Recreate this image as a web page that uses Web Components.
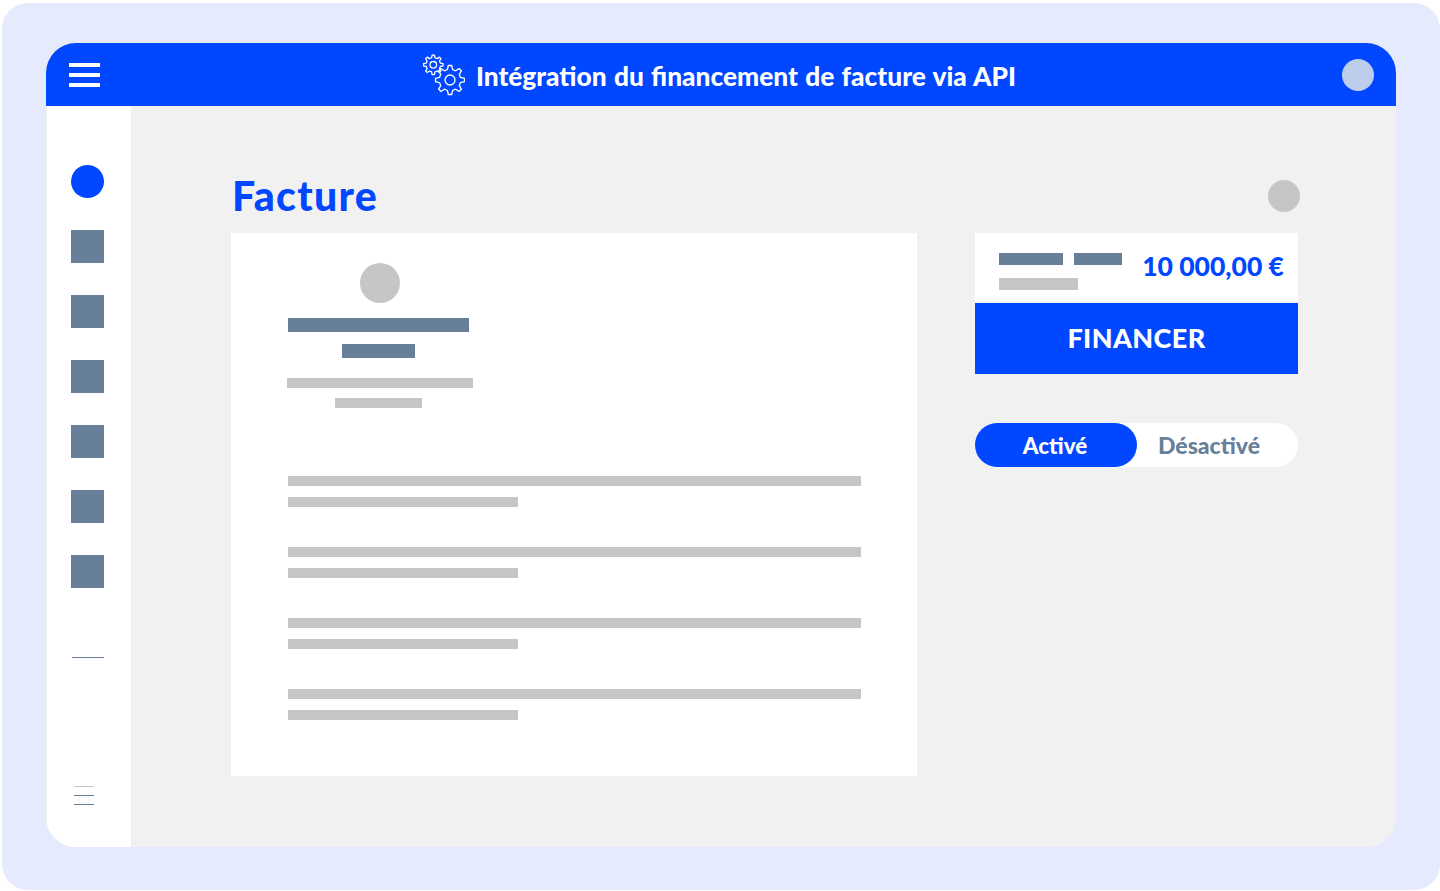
<!DOCTYPE html>
<html lang="fr">
<head>
<meta charset="utf-8">
<title>Facture</title>
<style>
  html, body { margin: 0; padding: 0; background: #fff; }
  body { font-family: "Lato", "Liberation Sans", sans-serif; }
</style>
</head>
<body>
<app-frame>
  <top-bar slot="top" label="Intégration du financement de facture via API"></top-bar>
  <side-nav slot="side"></side-nav>
  <invoice-page>
    <invoice-doc slot="doc"></invoice-doc>
    <pay-panel slot="panel"></pay-panel>
  </invoice-page>
</app-frame>

<script>
// 8 tooth gear outline, used twice in the header
function gearPath(cx, cy, R, teeth) {
  const r = R * 0.74;
  const step = Math.PI * 2 / teeth;
  const pts = [];
  for (let n = 0; n < teeth; n++) {
    const a = n * step;
    pts.push([r, a - step * 0.30], [R, a - step * 0.15], [R, a + step * 0.15], [r, a + step * 0.30]);
  }
  return 'M' + pts.map(([d, a]) => (cx + d * Math.cos(a)).toFixed(2) + ' ' + (cy + d * Math.sin(a)).toFixed(2)).join('L') + 'Z';
}

class AppFrame extends HTMLElement {
  constructor() {
    super();
    this.attachShadow({ mode: 'open' });
    this.shadowRoot.innerHTML = `
      <style>
        :host { display: block; width: 1440px; height: 891px; box-sizing: border-box; padding: 3px 0 1px 2px; }
        .outer { height: 100%; box-sizing: border-box; background: #E5EAFD; border-radius: 26px; padding: 40px 44px 43px 44px; }
        .window { height: 100%; display: flex; flex-direction: column; border-radius: 30px; overflow: hidden; background: #F1F1F1; }
        .body { flex: 1; display: flex; min-height: 0; }
      </style>
      <div class="outer">
        <div class="window">
          <slot name="top"></slot>
          <div class="body">
            <slot name="side"></slot>
            <slot></slot>
          </div>
        </div>
      </div>
    `;
  }
}

class TopBar extends HTMLElement {
  constructor() {
    super();
    this.attachShadow({ mode: 'open' });
    this.shadowRoot.innerHTML = `
      <style>
        :host { display: flex; align-items: center; height: 63px; flex: none; background: #0047FF; color: #fff; padding: 0 22px 0 23px; box-sizing: border-box; }
        .burger { width: 31px; display: flex; flex-direction: column; gap: 6px; }
        .burger i { display: block; height: 4px; background: #fff; }
        .title { flex: 1; display: flex; align-items: center; justify-content: center; gap: 11px; padding-right: 3px; font-size: 26.3px; word-spacing: 1px; font-weight: 900; white-space: nowrap; }
        .title svg { flex: none; }
        .title span { position: relative; top: 1px; }
        .avatar { width: 32px; height: 32px; border-radius: 50%; background: #BDCDEB; }
      </style>
      <div class="burger"><i></i><i></i><i></i></div>
      <div class="title">
        <svg width="42" height="42" viewBox="0 0 42 42" fill="none" stroke="#fff" stroke-width="1.3" stroke-linejoin="round">
          <path d="${gearPath(10.3, 10.8, 9.8, 8)}"/>
          <circle cx="10.3" cy="10.800" r="3.300"/>
          <path d="${gearPath(27, 26, 14.6, 8)}"/>
          <circle cx="27" cy="26" r="5"/>
        </svg>
        <span id="label"></span>
      </div>
      <div class="avatar"></div>
    `;
  }
  connectedCallback() {
    this.shadowRoot.getElementById('label').textContent = this.getAttribute('label');
  }
}

class SideNav extends HTMLElement {
  constructor() {
    super();
    this.attachShadow({ mode: 'open' });
    this.shadowRoot.innerHTML = `
      <style>
        :host { display: flex; flex-direction: column; align-items: flex-start; flex: none; width: 85px; box-sizing: border-box; background: #fff; padding: 59px 0 0 24px; border-left: 1px solid #F1F1F1; }
        .dot { width: 33px; height: 33px; border-radius: 50%; background: #0047FF; }
        .sq { width: 33px; height: 33px; margin-top: 32px; background: #677F98; }
        .rule { width: 32px; height: 1px; margin: 69px 0 0 1px; background: #677F98; }
        .mini { width: 20px; margin: 128px 0 0 3px; display: flex; flex-direction: column; gap: 8px; }
        .mini i { display: block; height: 1px; background: #677F98; }
        .mini i:first-child { background: #BCC5D2; }
      </style>
      <div class="dot"></div>
      <div class="sq"></div><div class="sq"></div><div class="sq"></div>
      <div class="sq"></div><div class="sq"></div><div class="sq"></div>
      <div class="rule"></div>
      <div class="mini"><i></i><i></i><i></i></div>
    `;
  }
}

class InvoicePage extends HTMLElement {
  constructor() {
    super();
    this.attachShadow({ mode: 'open' });
    this.shadowRoot.innerHTML = `
      <style>
        :host { display: block; flex: 1; min-width: 0; box-sizing: border-box; padding: 73px 96px 0 100px; background: #F1F1F1; }
        .head { display: flex; justify-content: space-between; align-items: center; height: 34px; margin-bottom: 20px; }
        h1 { margin: 0; padding-left: 1px; font-size: 41px; letter-spacing: 1.3px; line-height: 34px; font-weight: 900; color: #0047FF; }
        .circle { width: 32px; height: 32px; border-radius: 50%; background: #C6C6C6; }
        .cols { display: flex; gap: 58px; align-items: flex-start; }
      </style>
      <div class="head"><h1>Facture</h1><div class="circle"></div></div>
      <div class="cols">
        <slot name="doc"></slot>
        <slot name="panel"></slot>
      </div>
    `;
  }
}

class InvoiceDoc extends HTMLElement {
  constructor() {
    super();
    this.attachShadow({ mode: 'open' });
    const blocks = [0, 1, 2, 3].map(() => '<div class="block"><i class="long"></i><i class="short"></i></div>').join('');
    this.shadowRoot.innerHTML = `
      <style>
        :host { display: block; flex: none; width: 686px; height: 543px; box-sizing: border-box; background: #fff; padding: 30px 56px 0 57px; }
        .head { width: 186px; margin-left: -1px; display: flex; flex-direction: column; align-items: center; }
        .logo { width: 40px; height: 40px; border-radius: 50%; background: #C6C6C6; }
        .b1 { width: 181px; height: 14px; background: #677F98; margin: 15px 4px 0 0; }
        .b2 { width: 73px; height: 14px; background: #677F98; margin: 12px 4px 0 0; }
        .g1 { width: 186px; height: 10px; background: #C6C6C6; margin-top: 20px; }
        .g2 { width: 87px; height: 10px; background: #C6C6C6; margin: 10px 4px 0 0; }
        .lines { margin-top: 68px; display: flex; flex-direction: column; gap: 40px; }
        .block { display: flex; flex-direction: column; gap: 11px; }
        .block i { display: block; height: 10px; background: #C6C6C6; }
        .long { width: 573px; }
        .short { width: 230px; }
      </style>
      <div class="head">
        <div class="logo"></div>
        <div class="b1"></div>
        <div class="b2"></div>
        <div class="g1"></div>
        <div class="g2"></div>
      </div>
      <div class="lines">${blocks}</div>
    `;
  }
}

class PayPanel extends HTMLElement {
  constructor() {
    super();
    this.attachShadow({ mode: 'open' });
    this.shadowRoot.innerHTML = `
      <style>
        :host { display: block; flex: none; width: 323px; }
        .sum { height: 69px; box-sizing: border-box; background: #fff; display: flex; justify-content: space-between; padding: 20px 14px 0 24px; }
        .bars { display: flex; flex-direction: column; gap: 13px; }
        .row { display: flex; gap: 11px; }
        .row i { display: block; height: 12px; background: #677F98; }
        .row i:first-child { width: 64px; }
        .row i:last-child { width: 48px; }
        .gray { width: 79px; height: 12px; border-radius: 1px; background: #C6C6C6; }
        .amount { font-size: 26.5px; line-height: 27px; font-weight: 900; color: #0047FF; white-space: nowrap; }
        button { display: block; width: 100%; height: 71px; margin-top: 1px; border: 0; padding: 0 0 2px; background: #0047FF; color: #fff; font: 900 27px "Lato", sans-serif; letter-spacing: .4px; }
        .toggle { margin-top: 49px; height: 44px; display: flex; background: #fff; border-radius: 22px; font-weight: 900; }
        .on { width: 162px; border-radius: 22px; background: #0047FF; color: #fff; font-size: 22.4px; display: flex; align-items: center; justify-content: center; padding-right: 2px; box-sizing: border-box; }
        .off { flex: 1; color: #677F98; font-size: 23px; display: flex; align-items: center; justify-content: center; padding-right: 17px; }
      </style>
      <div class="sum">
        <div class="bars">
          <div class="row"><i></i><i></i></div>
          <div class="gray"></div>
        </div>
        <div class="amount">10 000,00 €</div>
      </div>
      <button type="button">FINANCER</button>
      <div class="toggle"><div class="on">Activé</div><div class="off">Désactivé</div></div>
    `;
  }
}

customElements.define('app-frame', AppFrame);
customElements.define('top-bar', TopBar);
customElements.define('side-nav', SideNav);
customElements.define('invoice-page', InvoicePage);
customElements.define('invoice-doc', InvoiceDoc);
customElements.define('pay-panel', PayPanel);
</script>
</body>
</html>
